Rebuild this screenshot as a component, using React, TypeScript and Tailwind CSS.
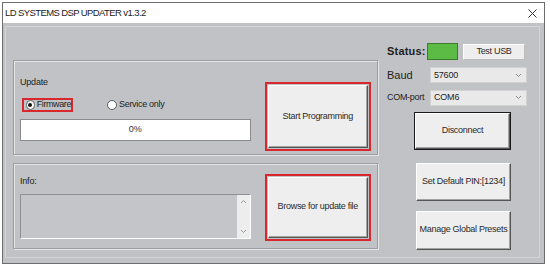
import React from 'react';

const font = { fontFamily: '"Liberation Sans", Arial, sans-serif' };

function WinButton({ children, className = '' }: { children: React.ReactNode; className?: string }) {
  return (
    <button
      className={`flex items-center justify-center bg-[#eeeeee] border border-t-white border-l-white border-r-[#555] border-b-[#555] shadow-[inset_-1px_-1px_0_#a3a3a3] text-[9px] tracking-[-0.3px] text-[#2a2a2a] ${className}`}
    >
      {children}
    </button>
  );
}

function Radio({ checked }: { checked?: boolean }) {
  return (
    <span className="w-[10px] h-[10px] rounded-full bg-white border border-[#5f5f5f] flex items-center justify-center">
      {checked && <span className="w-[4px] h-[4px] rounded-full bg-[#111]" />}
    </span>
  );
}

function Select({ value }: { value: string }) {
  return (
    <div className="w-[97px] h-[16px] bg-[#e9e9e9] border border-[#d2d2d2] flex items-center justify-between pl-[3px] pr-[4px]">
      <span className="text-[9px] tracking-[-0.2px] text-[#222]">{value}</span>
      <svg width="7" height="5" viewBox="0 0 7 5">
        <path d="M1 1 L3.5 3.5 L6 1" fill="none" stroke="#8a8a8a" strokeWidth="1" />
      </svg>
    </div>
  );
}

function GroupBox({ children, className = '' }: { children: React.ReactNode; className?: string }) {
  return (
    <div className={`border border-[#9c9ea2] shadow-[inset_1px_1px_0_#e4e5e7,1px_1px_0_#e4e5e7] ${className}`}>
      {children}
    </div>
  );
}

export default function App() {
  return (
    <div className="w-[550px] h-[272px] bg-white pt-[2px] pl-[2px]" style={font}>
      <div className="w-[543px] h-[262px] border border-[#6d6d6d] flex flex-col">
        {/* title bar */}
        <div className="h-[20px] bg-white flex items-center justify-between pl-[2px] pr-[7px]">
          <span className="text-[9.5px] tracking-[-0.6px] text-[#222]">LD SYSTEMS DSP UPDATER v1.3.2</span>
          <svg width="9" height="9" viewBox="0 0 9 9">
            <path d="M0.5 0.5 L8.5 8.5 M8.5 0.5 L0.5 8.5" stroke="#333" strokeWidth="1" />
          </svg>
        </div>

        {/* body */}
        <div className="flex-1 bg-[#c0c2c6] pt-[3px] pl-[2px] pr-[4px] pb-[5px]">
          <div className="h-full border border-[#d3d5d8] flex">
            {/* left column */}
            <div className="w-[372px] pl-[7px] pt-[33px] flex flex-col gap-[8px]">
              <GroupBox className="h-[95px] flex items-end pl-[6px] pr-[6px] pb-[3px]">
                <div className="w-[232px] h-full flex flex-col">
                  <span className="mt-[15px] text-[9px] tracking-[-0.2px] text-[#222]">Update</span>
                  <div className="mt-[8px] flex items-center">
                    <div className="h-[14px] w-[51px] ml-[2px] border-2 border-[#d8282e] flex items-center gap-[2px] pl-[2px]">
                      <Radio checked />
                      <span className="text-[9px] tracking-[-0.4px] text-[#222]">Firmware</span>
                    </div>
                    <div className="ml-[34px] flex items-center gap-[2px]">
                      <Radio />
                      <span className="text-[9px] tracking-[-0.3px] text-[#222]">Service only</span>
                    </div>
                  </div>
                  <div className="mt-[7px] h-[22px] bg-white border border-[#8b8b8b] flex items-center justify-center">
                    <span className="text-[9px] text-[#333]">0%</span>
                  </div>
                </div>
                <div className="ml-[14px] w-[107px] h-[69px] border-2 border-[#d8282e] p-[1px]">
                  <WinButton className="w-full h-full">Start Programming</WinButton>
                </div>
              </GroupBox>

              <GroupBox className="h-[86px] flex items-center pl-[6px] pr-[6px] pt-[2px]">
                <div className="w-[232px] flex flex-col">
                  <span className="text-[9px] tracking-[-0.2px] text-[#222]">Info:</span>
                  <div className="mt-[5px] h-[45px] bg-[#c3c5c9] border border-t-[#8e9094] border-l-[#8e9094] border-r-white border-b-white flex justify-end">
                    <div className="w-[13px] h-full bg-[#ededed] flex flex-col items-center justify-between py-[4px]">
                      <svg width="7" height="5" viewBox="0 0 7 5">
                        <path d="M1 4 L3.5 1.5 L6 4" fill="none" stroke="#9a9a9a" strokeWidth="1" />
                      </svg>
                      <svg width="7" height="5" viewBox="0 0 7 5">
                        <path d="M1 1 L3.5 3.5 L6 1" fill="none" stroke="#9a9a9a" strokeWidth="1" />
                      </svg>
                    </div>
                  </div>
                </div>
                <div className="ml-[14px] w-[107px] h-[67px] border-2 border-[#d8282e] p-[1px]">
                  <WinButton className="w-full h-full">Browse for update file</WinButton>
                </div>
              </GroupBox>
            </div>

            {/* right column */}
            <div className="ml-[9px] pt-[16px] flex flex-col w-[141px]">
              <div className="flex items-center h-[17px]">
                <span className="w-[40px] text-[11px] font-bold tracking-[0.2px] text-[#1e1e1e]">Status:</span>
                <div className="w-[31px] h-[17px] bg-[#5bbb45] border border-[#3c7a2c]" />
                <WinButton className="ml-[5px] w-[62px] h-[16px] border-r-[#bdbdbd] border-b-[#bdbdbd] shadow-none">Test USB</WinButton>
              </div>
              <div className="mt-[7px] flex items-center">
                <span className="w-[43px] text-[11px] text-[#222]">Baud</span>
                <Select value="57600" />
              </div>
              <div className="mt-[6px] flex items-center">
                <span className="w-[43px] text-[9px] tracking-[-0.3px] text-[#222]">COM-port</span>
                <Select value="COM6" />
              </div>
              <button className="mt-[6px] ml-[27px] w-[97px] h-[38px] border border-[#1a1a1a] p-0 flex">
                <WinButton className="w-full h-full">Disconnect</WinButton>
              </button>
              <WinButton className="mt-[13px] ml-[29px] w-[95px] h-[38px]">Set Default PIN:[1234]</WinButton>
              <WinButton className="mt-[10px] ml-[29px] w-[95px] h-[39px]">Manage Global Presets</WinButton>
            </div>
          </div>
        </div>
      </div>
    </div>
  );
}
